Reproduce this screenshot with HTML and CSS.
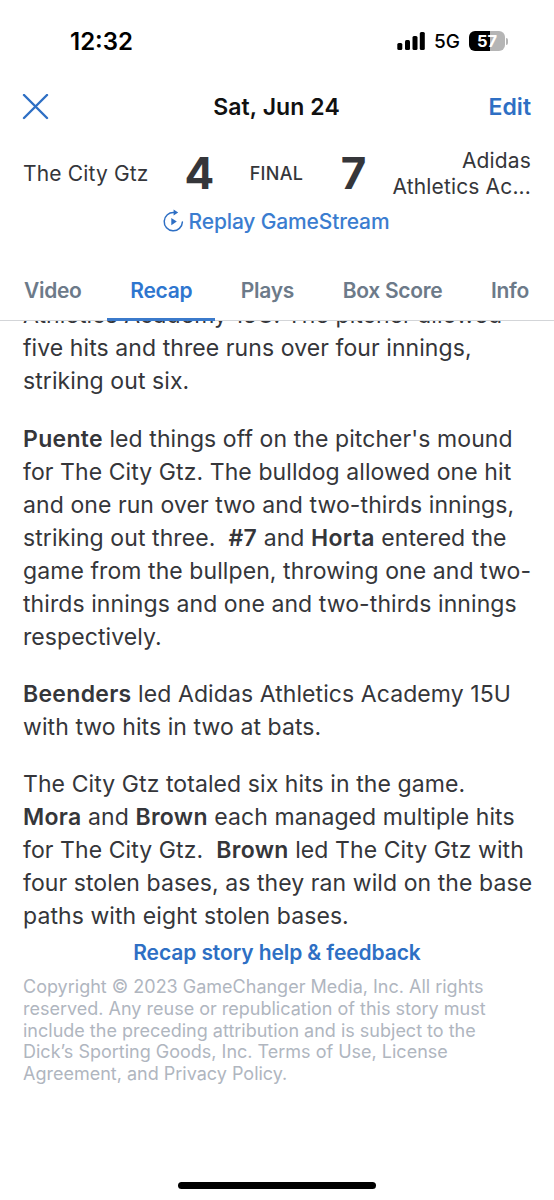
FILE: index.html
```html
<!DOCTYPE html>
<html lang="en">
<head>
  <meta charset="UTF-8">
  <meta name="viewport" content="width=device-width, initial-scale=1.0">
  <title>Game Recap</title>
  <link rel="stylesheet" href="styles.css">
</head>
<body>
  <div class="header">
    <div class="status-bar">
      <span class="clock">12:32</span>
      <div class="status-icons">
        <svg class="signal" width="28" height="18" viewBox="0 0 28 18">
          <rect x="0.3" y="11" width="5" height="7" rx="1.5"/>
          <rect x="8" y="8" width="5" height="10" rx="1.5"/>
          <rect x="15.5" y="4" width="5" height="14" rx="1.5"/>
          <rect x="22.8" y="0" width="5" height="18" rx="1.5"/>
        </svg>
        <span class="network">5G</span>
        <div class="battery"><span>57</span></div>
        <div class="battery-tip"></div>
      </div>
    </div>

    <div class="title-bar">
      <svg class="close" width="27" height="26" viewBox="0 0 27 26">
        <path d="M2 1 25 24M25 1 2 24"/>
      </svg>
      <h1>Sat, Jun 24</h1>
      <a class="edit" href="#edit">Edit</a>
    </div>

    <div class="scoreboard">
      <div class="team">The City Gtz</div>
      <div class="score">4</div>
      <div class="game-state">FINAL</div>
      <div class="score">7</div>
      <div class="team away">Adidas<br>Athletics Ac...</div>
    </div>

    <a class="replay" href="#replay">
      <svg width="21" height="24" viewBox="0 0 21 24">
        <path class="ring" d="M11 3.6A9.1 9.1 0 1 0 19.4 13"/>
        <path d="M10.6 0.6 15.2 3.6 10.6 6.6ZM8.3 9 13.8 12.6 8.3 16.2Z"/>
      </svg>
      <span>Replay GameStream</span>
    </a>

    <div class="tabs">
      <a href="#video">Video</a>
      <a class="active" href="#recap">Recap</a>
      <a href="#plays">Plays</a>
      <a href="#box-score">Box Score</a>
      <a href="#info">Info</a>
    </div>
  </div>

  <div class="recap">
    <div class="story">
      <p>Athletics Academy 15U. The pitcher allowed<br>five hits and three runs over four innings,<br>striking out six.</p>
      <p><b>Puente</b> led things off on the pitcher's mound<br>for The City Gtz. The bulldog allowed one hit<br>and one run over two and two-thirds innings,<br>striking out three.&nbsp; <b>#7</b> and <b>Horta</b> entered the<br>game from the bullpen, throwing one and two-<br>thirds innings and one and two-thirds innings<br>respectively.</p>
      <p><b>Beenders</b> led Adidas Athletics Academy 15U<br>with two hits in two at bats.</p>
      <p>The City Gtz totaled six hits in the game.<br><b>Mora</b> and <b>Brown</b> each managed multiple hits<br>for The City Gtz.&nbsp; <b>Brown</b> led The City Gtz with<br>four stolen bases, as they ran wild on the base<br>paths with eight stolen bases.</p>
    </div>
    <a class="feedback" href="#feedback">Recap story help &amp; feedback</a>
    <p class="copyright">Copyright © 2023 GameChanger Media, Inc. All rights<br>reserved. Any reuse or republication of this story must<br>include the preceding attribution and is subject to the<br>Dick’s Sporting Goods, Inc. Terms of Use, License<br>Agreement, and Privacy Policy.</p>
  </div>

  <div class="home-indicator"></div>
</body>
</html>
```
FILE: styles.css
```css
* {
  box-sizing: border-box;
}

body {
  font-family: Inter, "Liberation Sans", sans-serif;
  margin: 0;
  height: 1200px;
  display: flex;
  flex-direction: column;
  background-color: #fff;
  color: #35363a;
  overflow: hidden;
  white-space: nowrap;
}

a {
  color: #2e6fc4;
  text-decoration: none;
}

.header {
  height: 321px;
  flex: none;
  border-bottom: 1px solid #d3d5d8;
}

.status-bar {
  display: flex;
  justify-content: space-between;
  height: 82px;
  padding: 0 46px 0 70px;
  align-items: center;
  color: #000;
}

.clock {
  font-size: 24px;
  font-weight: 600;
}

.status-icons {
  display: flex;
  align-items: center;
}

.network {
  font-size: 19px;
  font-weight: 500;
  margin-left: 9px;
  width: 35px;
}

.battery {
  width: 36px;
  height: 20px;
  border-radius: 6px;
  background: linear-gradient(to right, #000 57%, #b5b5b5 57%);
  color: #fff;
  font-size: 16.5px;
  font-weight: 700;
  line-height: 20px;
  text-align: center;
}

.battery-tip {
  width: 2px;
  height: 7px;
  margin-left: 1px;
  border-radius: 0 3px 3px 0;
  background-color: #b5b5b5;
}

.title-bar {
  display: grid;
  grid-template-columns: 1fr auto 1fr;
  align-items: center;
  height: 50px;
  padding: 0 23px 0 22px;
}

.close {
  fill: none;
  stroke: #2e6fc4;
  stroke-width: 2.4;
  stroke-linecap: round;
}

.title-bar h1 {
  margin: 0;
  font-size: 23px;
  font-weight: 600;
  letter-spacing: 0.1px;
  color: #111;
}

.edit {
  justify-self: end;
  font-size: 23px;
  font-weight: 600;
}

.scoreboard {
  display: grid;
  grid-template-columns: 153px 47px 107px 47px 1fr;
  align-items: center;
  justify-items: center;
  height: 82px;
  padding: 0 23px;
}

.team {
  justify-self: start;
  width: 130px;
  padding-top: 1px;
  font-size: 21px;
  line-height: 26px;
  letter-spacing: 0.15px;
}

.away {
  justify-self: end;
  width: auto;
  text-align: right;
}

.score {
  font-size: 44px;
  font-weight: 700;
}

.game-state {
  font-size: 18px;
  font-weight: 500;
  letter-spacing: 0.3px;
}

.replay {
  display: flex;
  justify-content: center;
  align-items: center;
  gap: 5px;
  height: 14px;
  padding-right: 2px;
  font-size: 21px;
  font-weight: 500;
  letter-spacing: -0.15px;
  color: #3b7dd0;
}

.replay svg {
  fill: #2e6fc4;
}

.replay .ring {
  fill: none;
  stroke: #2e6fc4;
  stroke-width: 1.5;
  stroke-linecap: round;
}

.tabs {
  display: flex;
  justify-content: space-between;
  height: 93px;
  padding: 33px 2px 0 1px;
}

.tabs a {
  height: 60px;
  padding: 0 23px;
  font-size: 21px;
  font-weight: 600;
  line-height: 59px;
  letter-spacing: -0.3px;
  color: #6c7a89;
}

.tabs .active {
  color: #2e76cf;
  border-bottom: 3px solid #3b7acb;
}

.recap {
  height: 850px;
  padding: 0 23px;
  overflow: hidden;
}

.story {
  margin-top: -22px;
  font-size: 23px;
  line-height: 33px;
  letter-spacing: 0.08px;
}

.story p {
  margin: 0 0 24px;
}

.story p:first-child {
  margin-bottom: 25px;
}

.story p:last-child {
  margin-bottom: 0;
}

.story b {
  font-weight: 600;
  letter-spacing: 0.3px;
}

.feedback {
  display: block;
  text-align: center;
  font-size: 21px;
  font-weight: 600;
  line-height: 40px;
  letter-spacing: -0.1px;
}

.copyright {
  margin: 3px 0 0;
  font-size: 18px;
  line-height: 21.8px;
  color: #b0b6bf;
}

.home-indicator {
  width: 198px;
  height: 7px;
  margin: 11px auto 0;
  border-radius: 4px;
  background-color: #000;
}
```
